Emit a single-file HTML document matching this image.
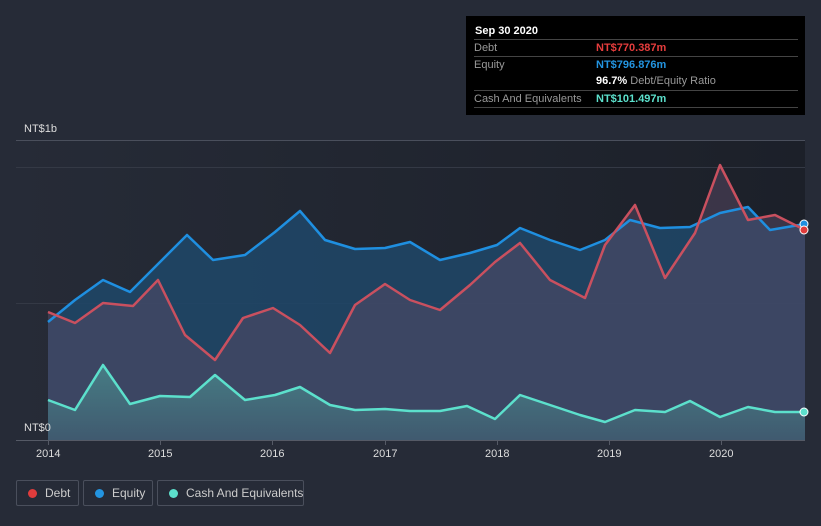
<!DOCTYPE html><html><head><style>
body{margin:0;width:821px;height:526px;background:#262b37;font-family:"Liberation Sans",sans-serif;overflow:hidden;position:relative}
.tt{position:absolute;left:466px;top:16px;width:339px;height:99px;background:#000;color:#fff;font-size:11px}
.tt .h{position:absolute;left:9px;top:9px;font-weight:bold}
.row{position:absolute;left:8px;width:324px;border-top:1px solid #444;height:17px}
.row span{position:absolute;top:2px;white-space:nowrap}
.l{left:0;color:#999}.v{left:122px;font-weight:bold}
.lg{position:absolute;top:480px;height:26px;border:1px solid #4a4f5c;border-radius:2px;color:#ccc;font-size:12px;line-height:24px;box-sizing:border-box;white-space:nowrap}
.lg i{position:absolute;left:11px;top:8px;width:9px;height:9px;border-radius:50%}
.lg span{position:absolute;left:28px}
.ax{position:absolute;color:#ddd;font-size:11px}
</style></head><body>
<svg width="821" height="526" style="position:absolute;left:0;top:0">
<defs><linearGradient id="pg" x1="0" x2="1"><stop offset="0" stop-color="#262b37"/><stop offset="1" stop-color="#1c2029"/></linearGradient>
<linearGradient id="cg" x1="0" y1="0" x2="0" y2="1"><stop offset="0" stop-color="#4fa9a0" stop-opacity=".55"/><stop offset="1" stop-color="#4fa9a0" stop-opacity=".2"/></linearGradient></defs>
<rect x="16" y="140" width="789" height="300" fill="url(#pg)"/>
<line x1="16" y1="140.5" x2="805" y2="140.5" stroke="#4a4f5c"/>
<line x1="16" y1="167.5" x2="805" y2="167.5" stroke="#343945"/>
<line x1="16" y1="303.5" x2="805" y2="303.5" stroke="#343945"/>
<path d="M48,322 L75,300 103,280 130,292 160,262 187,235 213,260 245,255 275,232 300,211 325,240 355,249 385,248 410,242 440,260 470,253 497,245 520,228 550,240 580,250 605,240 630,220 660,228 690,227 720,213 748,207 770,230 805,224 L805,440 48,440Z" fill="#1f4666" fill-opacity=".9"/>
<path d="M48,312 L75,323 103,303 133,306 158,280 185,335 215,360 243,318 273,308 300,325 330,353 355,305 385,284 410,300 440,310 470,285 495,262 520,243 550,280 585,298 605,245 635,205 665,278 695,233 720,165 748,220 775,215 805,230 L805,440 48,440Z" fill="#5a4a66" fill-opacity=".5"/>
<path d="M48,400 L75,410 103,365 130,404 160,396 190,397 215,375 245,400 275,395 300,387 330,405 355,410 385,409 410,411 440,411 467,406 495,419 520,395 550,405 580,415 605,422 635,410 665,412 690,401 720,417 748,407 775,412 805,412 L805,440 48,440Z" fill="url(#cg)"/>
<g fill="none" stroke-width="2.5" stroke-linejoin="round">
<polyline stroke="#1f8fe0" points="48,322 75,300 103,280 130,292 160,262 187,235 213,260 245,255 275,232 300,211 325,240 355,249 385,248 410,242 440,260 470,253 497,245 520,228 550,240 580,250 605,240 630,220 660,228 690,227 720,213 748,207 770,230 805,224"/>
<polyline stroke="#c9505f" points="48,312 75,323 103,303 133,306 158,280 185,335 215,360 243,318 273,308 300,325 330,353 355,305 385,284 410,300 440,310 470,285 495,262 520,243 550,280 585,298 605,245 635,205 665,278 695,233 720,165 748,220 775,215 805,230"/>
<polyline stroke="#5ce0cc" points="48,400 75,410 103,365 130,404 160,396 190,397 215,375 245,400 275,395 300,387 330,405 355,410 385,409 410,411 440,411 467,406 495,419 520,395 550,405 580,415 605,422 635,410 665,412 690,401 720,417 748,407 775,412 805,412"/>
</g>
<circle cx="804" cy="224" r="4" fill="#1f8fe0" stroke="#fff"/><circle cx="804" cy="230" r="4" fill="#e03c3c" stroke="#fff"/><circle cx="804" cy="412" r="4" fill="#5ce0cc" stroke="#fff"/>
<line x1="16" y1="440.5" x2="805" y2="440.5" stroke="#555a66"/>
<g stroke="#555a66"><line x1="48.5" y1="440" x2="48.5" y2="445"/><line x1="160.5" y1="440" x2="160.5" y2="445"/><line x1="272.5" y1="440" x2="272.5" y2="445"/><line x1="385.5" y1="440" x2="385.5" y2="445"/><line x1="497.5" y1="440" x2="497.5" y2="445"/><line x1="609.5" y1="440" x2="609.5" y2="445"/><line x1="721.5" y1="440" x2="721.5" y2="445"/></g>
</svg>
<div class="ax" style="left:24px;top:123px">NT$1b</div>
<div class="ax" style="left:24px;top:422px">NT$0</div>
<div class="ax" style="left:36px;top:448px">2014</div><div class="ax" style="left:148px;top:448px">2015</div><div class="ax" style="left:260px;top:448px">2016</div><div class="ax" style="left:373px;top:448px">2017</div><div class="ax" style="left:485px;top:448px">2018</div><div class="ax" style="left:597px;top:448px">2019</div><div class="ax" style="left:709px;top:448px">2020</div>
<div class="tt"><div class="h">Sep 30 2020</div>
<div class="row" style="top:23px"><span class="l">Debt</span><span class="v" style="color:#e63d3d">NT$770.387m</span></div>
<div class="row" style="top:40px"><span class="l">Equity</span><span class="v" style="color:#2394e0">NT$796.876m</span></div>
<div class="row" style="top:57px;border-top:none"><span class="v" style="color:#fff">96.7% <span style="position:static;color:#999;font-weight:normal">Debt/Equity Ratio</span></span></div>
<div class="row" style="top:74px"><span class="l">Cash And Equivalents</span><span class="v" style="color:#5ce0cc">NT$101.497m</span></div>
<div class="row" style="top:91px;height:0"></div>
</div>
<div class="lg" style="left:16px;width:63px"><i style="background:#e03c3c"></i><span>Debt</span></div>
<div class="lg" style="left:83px;width:70px"><i style="background:#2394e0"></i><span>Equity</span></div>
<div class="lg" style="left:157px;width:147px"><i style="background:#5ce0cc"></i><span>Cash And Equivalents</span></div>
</body></html>
